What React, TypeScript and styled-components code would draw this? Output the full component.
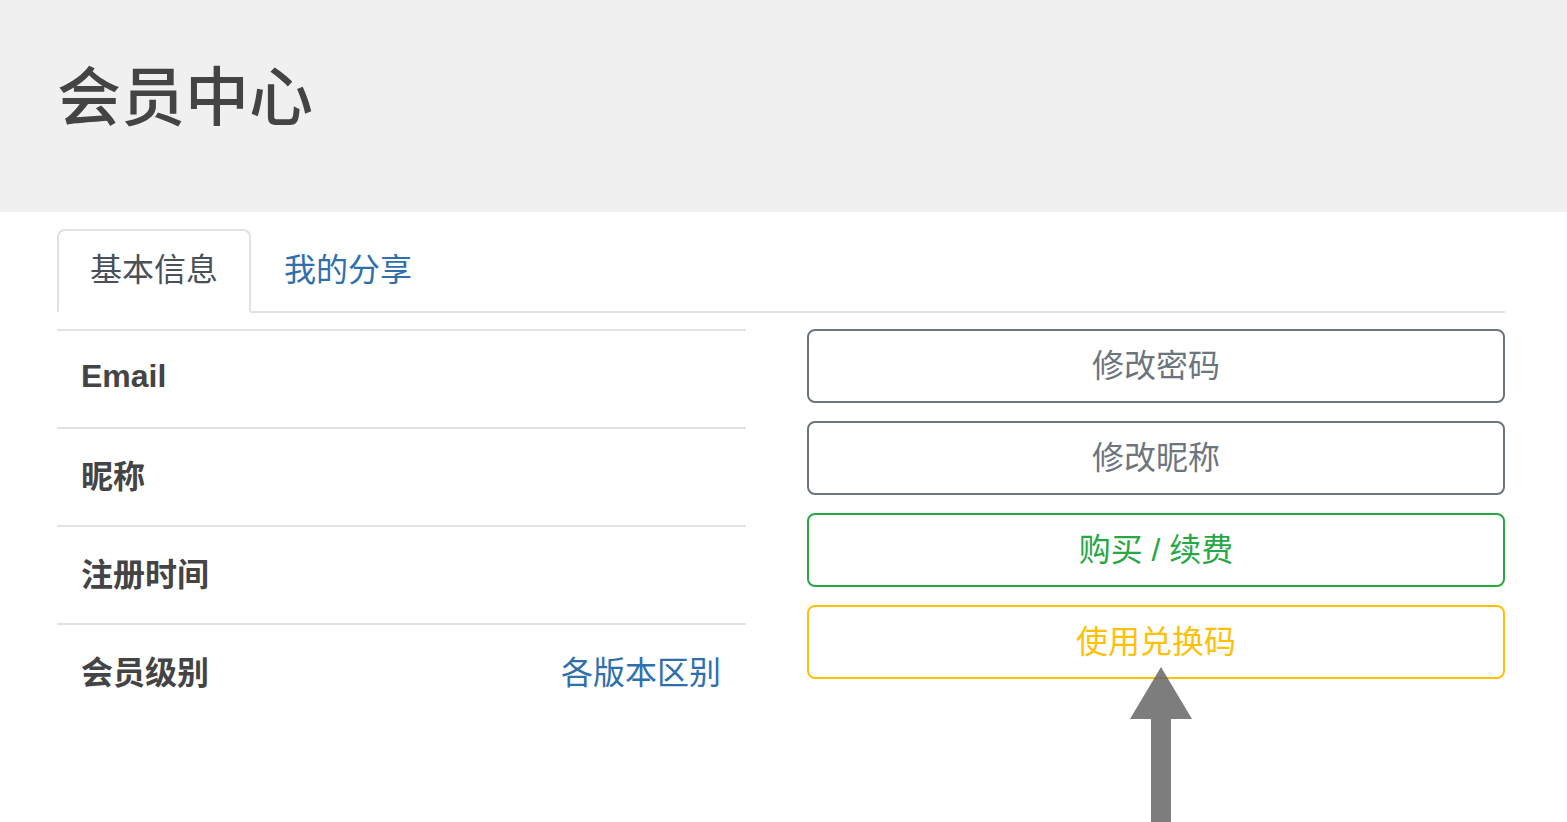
import React from "react";
import styled, { createGlobalStyle } from "styled-components";

const GlobalStyle = createGlobalStyle`
  html, body {
    margin: 0;
    padding: 0;
    background: #fff;
    font-family: "Liberation Sans", "Noto Sans CJK SC", sans-serif;
  }
`;

const colors = {
  text: "#444",
  tabText: "#495057",
  link: "#2f6fad",
  border: "#dee2e6",
  secondary: "#6c757d",
  success: "#28a745",
  warning: "#ffc107",
};

const Page = styled.div`
  position: relative;
  width: 1567px;
  height: 822px;
  overflow: hidden;
`;

const Jumbotron = styled.div`
  height: 212px;
  box-sizing: border-box;
  background: #f0f0f0;
  padding: 60px 57px 0;
`;

const Title = styled.h1`
  margin: 0;
  font-size: 64px;
  line-height: 77px;
  font-weight: 500;
  color: ${colors.text};
`;

const Container = styled.div`
  padding: 17px 62px 0 57px;
`;

const TabBar = styled.div`
  display: flex;
  height: 82px;
  border-bottom: 2px solid ${colors.border};
`;

const Tab = styled.div<{ $active?: boolean }>`
  display: flex;
  align-items: center;
  justify-content: center;
  width: 194px;
  box-sizing: border-box;
  margin-bottom: -2px;
  padding: 0 0 8px;
  font-size: 32px;
  color: ${(p) => (p.$active ? colors.tabText : colors.link)};
  border: 2px solid ${(p) => (p.$active ? colors.border : "transparent")};
  border-bottom-color: ${(p) => (p.$active ? "#fff" : "transparent")};
  border-radius: 8px 8px 0 0;
  background: ${(p) => (p.$active ? "#fff" : "transparent")};
`;

const Content = styled.div`
  display: flex;
  gap: 61px;
  margin-top: 16px;
`;

const InfoTable = styled.div`
  width: 689px;
`;

const InfoRow = styled.div`
  display: flex;
  align-items: center;
  justify-content: space-between;
  height: 98px;
  box-sizing: border-box;
  border-top: 2px solid ${colors.border};
  padding: 0 25px 6px 24px;
`;

const Label = styled.span`
  font-size: 32px;
  font-weight: 700;
  color: ${colors.text};
`;

const Link = styled.a`
  font-size: 32px;
  color: ${colors.link};
  text-decoration: none;
`;

const Actions = styled.div`
  display: flex;
  flex-direction: column;
  gap: 18px;
  width: 698px;
`;

const OutlineButton = styled.button<{ $color: string }>`
  height: 74px;
  box-sizing: border-box;
  padding: 0 0 6px;
  border: 2px solid ${(p) => p.$color};
  border-radius: 8px;
  background: #fff;
  color: ${(p) => p.$color};
  font-family: inherit;
  font-size: 32px;
  cursor: pointer;
`;

const Pointer = styled.svg`
  position: absolute;
  left: 1130px;
  top: 667px;
`;

const rows = ["Email", "昵称", "注册时间"];

const buttons = [
  { text: "修改密码", color: colors.secondary },
  { text: "修改昵称", color: colors.secondary },
  { text: "购买 / 续费", color: colors.success },
  { text: "使用兑换码", color: colors.warning },
];

export default function App() {
  return (
    <Page>
      <GlobalStyle />
      <Jumbotron>
        <Title>会员中心</Title>
      </Jumbotron>
      <Container>
        <TabBar>
          <Tab $active>基本信息</Tab>
          <Tab>我的分享</Tab>
        </TabBar>
        <Content>
          <InfoTable>
            {rows.map((r) => (
              <InfoRow key={r}>
                <Label>{r}</Label>
              </InfoRow>
            ))}
            <InfoRow>
              <Label>会员级别</Label>
              <Link href="#">各版本区别</Link>
            </InfoRow>
          </InfoTable>
          <Actions>
            {buttons.map((b) => (
              <OutlineButton key={b.text} $color={b.color}>
                {b.text}
              </OutlineButton>
            ))}
          </Actions>
        </Content>
      </Container>
      <Pointer width="62" height="155" viewBox="0 0 62 155">
        <polygon
          points="31,0 62,52 41,52 41,155 21,155 21,52 0,52"
          fill="#666"
          fillOpacity="0.85"
        />
      </Pointer>
    </Page>
  );
}
